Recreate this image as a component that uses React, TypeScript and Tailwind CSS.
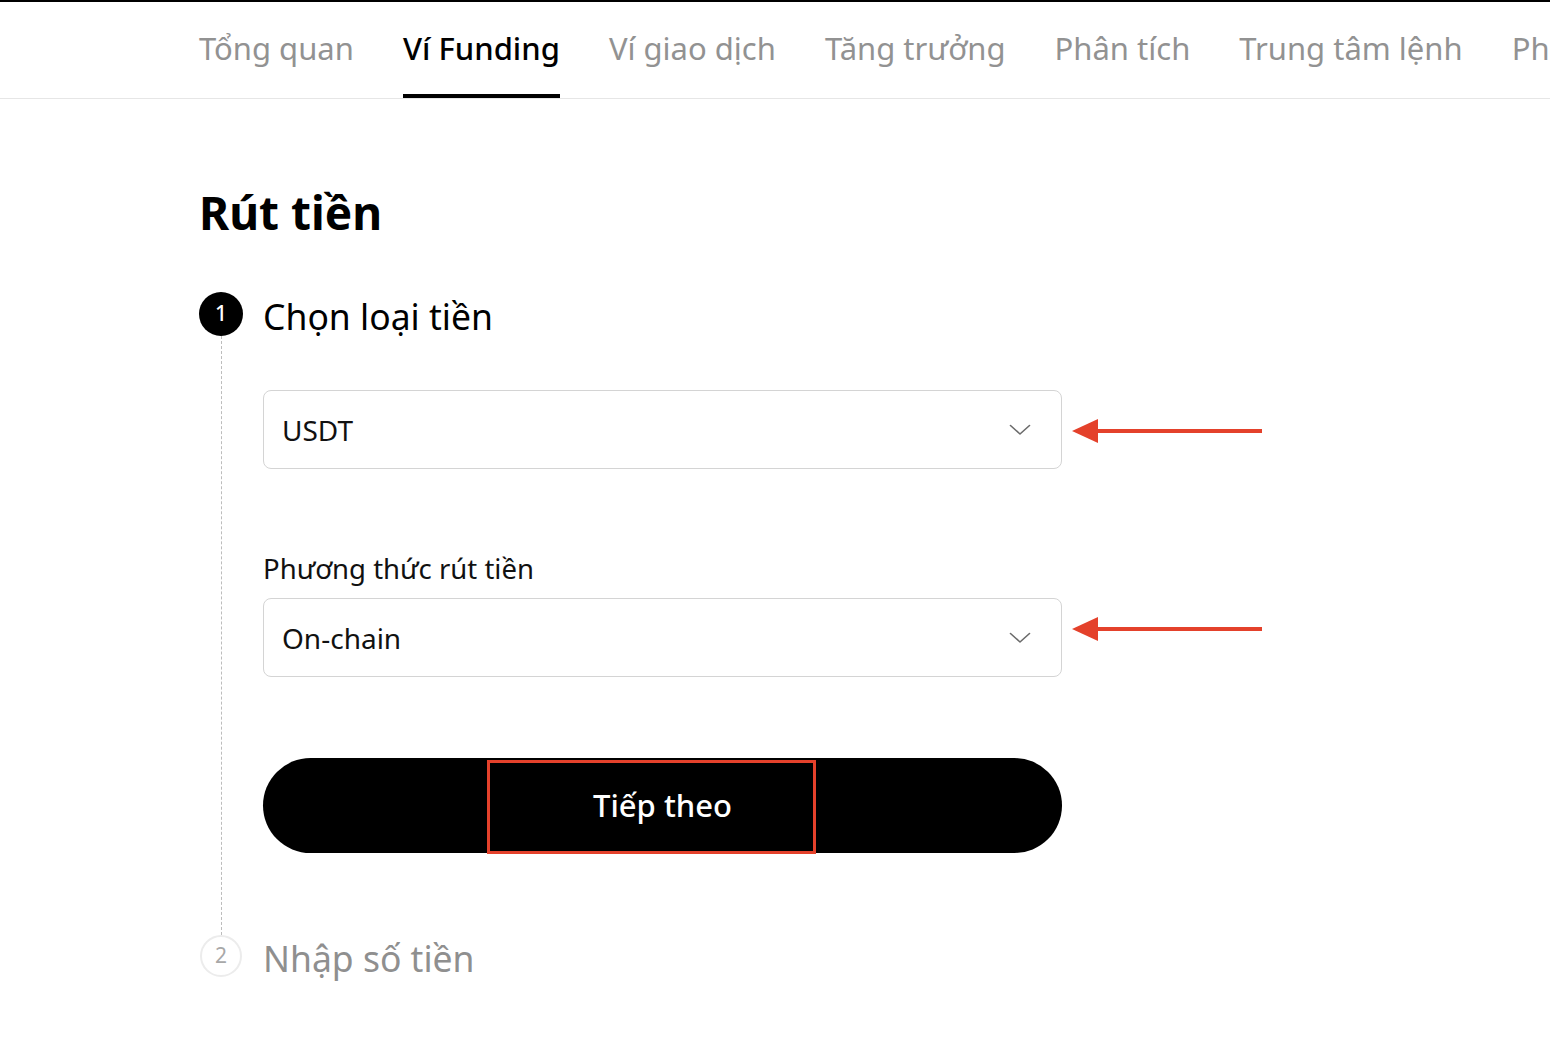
import React from "react";

/* ===================== DATA ===================== */
const tabs = [
  "Tổng quan",
  "Ví Funding",
  "Ví giao dịch",
  "Tăng trưởng",
  "Phân tích",
  "Trung tâm lệnh",
  "Phí",
];

/* ===================== ICONS ===================== */
function Chevron() {
  return (
    <svg width="22" height="12" viewBox="0 0 22 12" fill="none">
      <path
        d="M1.5 1.5 L11 10 L20.5 1.5"
        stroke="#6b6b6b"
        strokeWidth="1.6"
        strokeLinecap="round"
        strokeLinejoin="round"
      />
    </svg>
  );
}

function RedArrow() {
  return (
    <svg width="190" height="26" viewBox="0 0 190 26" fill="none">
      <path d="M0 13 L26 1 L26 25 Z" fill="#e4412b" />
      <rect x="22" y="11" width="168" height="4" fill="#e4412b" />
    </svg>
  );
}

/* ===================== SELECT ===================== */
function SelectBox({ value, arrowUp }: { value: string; arrowUp?: boolean }) {
  return (
    <div className="flex items-center">
      <div className="flex h-[79px] w-[799px] items-center justify-between rounded-[8px] border border-[#d4d4d4] pl-[18px] pr-[30px]">
        <span className="text-[28px] text-[#111]">{value}</span>
        <Chevron />
      </div>
      <div className={`ml-[10px] ${arrowUp ? "mb-[18px]" : "mt-[2px]"}`}>
        <RedArrow />
      </div>
    </div>
  );
}

/* ===================== PAGE ===================== */
export default function App() {
  return (
    <div
      className="min-h-[1038px] w-[1550px] overflow-hidden border-t-2 border-black bg-white text-black"
      style={{ fontFamily: '"Noto Sans", "Liberation Sans", sans-serif' }}
    >
      {/* TABS */}
      <div className="flex h-[97px] gap-[49px] border-b border-[#e6e6e6] pl-[199px] whitespace-nowrap">
        {tabs.map(t => {
          const active = t === "Ví Funding";
          return (
            <div
              key={t}
              className={`flex h-full items-center border-b-4 text-[31px] ${
                active
                  ? "border-black font-medium text-black"
                  : "border-transparent text-[#929292]"
              }`}
            >
              {t}
            </div>
          );
        })}
      </div>

      {/* CONTENT */}
      <div className="pl-[199px]">
        <h1 className="mt-[87px] text-[46px] font-bold leading-[53px]">
          Rút tiền
        </h1>

        <div className="mt-[53px] grid grid-cols-[44px_1fr] gap-x-[20px]">
          {/* STEP 1 */}
          <div className="flex h-[44px] w-[44px] items-center justify-center rounded-full bg-black text-[21px] font-medium text-white">
            1
          </div>
          <div className="flex h-[44px] items-center pt-[6px] text-[35.5px]">
            Chọn loại tiền
          </div>

          {/* RAIL */}
          <div className="flex justify-center">
            <div className="h-full border-l border-dashed border-[#bcbcbc]" />
          </div>
          <div className="pt-[54px] pb-[82px]">
            <SelectBox value="USDT" />

            <div className="mt-[83px] text-[27.5px] leading-[34px] text-[#111]">
              Phương thức rút tiền
            </div>
            <div className="mt-[12px]">
              <SelectBox value="On-chain" arrowUp />
            </div>

            <button className="relative mt-[81px] flex h-[95px] w-[799px] items-center justify-center rounded-full bg-black text-[31px] font-medium text-white">
              Tiếp theo
              <span className="absolute left-[224px] top-[2px] h-[94px] w-[329px] border-[3px] border-[#e4412b]" />
            </button>
          </div>

          {/* STEP 2 */}
          <div className="flex h-[42px] w-[42px] items-center justify-center justify-self-center rounded-full border-2 border-[#ececec] text-[21px] text-[#a8a8a8]">
            2
          </div>
          <div className="flex h-[42px] items-center pt-[5px] text-[35.5px] text-[#8f8f8f]">
            Nhập số tiền
          </div>
        </div>
      </div>
    </div>
  );
}
